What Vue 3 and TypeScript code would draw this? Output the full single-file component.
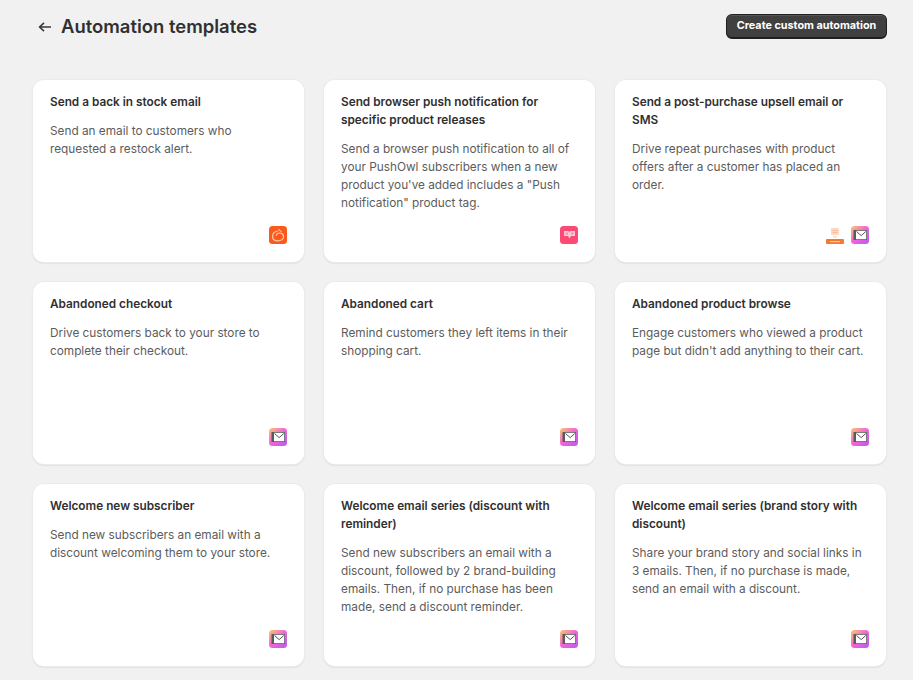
<script setup lang="ts">
interface Card { title: string; body: string; icons: string[] }
const cards: Card[] = [
  { title: 'Send a back in stock email', body: 'Send an email to customers who requested a restock alert.', icons: ['orange'] },
  { title: 'Send browser push notification for specific product releases', body: 'Send a browser push notification to all of your PushOwl subscribers when a new product you\'ve added includes a "Push notification" product tag.', icons: ['owl'] },
  { title: 'Send a post-purchase upsell email or SMS', body: 'Drive repeat purchases with product offers after a customer has placed an order.', icons: ['upsell', 'mail'] },
  { title: 'Abandoned checkout', body: 'Drive customers back to your store to complete their checkout.', icons: ['mail'] },
  { title: 'Abandoned cart', body: 'Remind customers they left items in their shopping cart.', icons: ['mail'] },
  { title: 'Abandoned product browse', body: "Engage customers who viewed a product page but didn't add anything to their cart.", icons: ['mail'] },
  { title: 'Welcome new subscriber', body: 'Send new subscribers an email with a discount welcoming them to your store.', icons: ['mail'] },
  { title: 'Welcome email series (discount with reminder)', body: 'Send new subscribers an email with a discount, followed by 2 brand-building emails. Then, if no purchase has been made, send a discount reminder.', icons: ['mail'] },
  { title: 'Welcome email series (brand story with discount)', body: 'Share your brand story and social links in 3 emails. Then, if no purchase is made, send an email with a discount.', icons: ['mail'] },
]
</script>

<template>
  <div class="page">
    <header class="head">
      <div class="head-left">
        <svg class="back" width="14" height="12" viewBox="0 0 14 12" fill="none">
          <path d="M13 6H2M6 1.8 1.6 6 6 10.2" stroke="#3a3a3a" stroke-width="1.6" />
        </svg>
        <h1>Automation templates</h1>
      </div>
      <button class="cta">Create custom automation</button>
    </header>
    <main class="grid">
      <article v-for="c in cards" :key="c.title" class="card">
        <h2>{{ c.title }}</h2>
        <p>{{ c.body }}</p>
        <div class="icons">
          <template v-for="i in c.icons" :key="i">
            <svg v-if="i === 'mail'" width="18" height="18" viewBox="0 0 18 18">
              <defs>
                <linearGradient id="mg" x1="0" y1="0" x2="1" y2="1">
                  <stop offset="0" stop-color="#fbc868" />
                  <stop offset="0.5" stop-color="#f262dc" />
                  <stop offset="1" stop-color="#b65cec" />
                </linearGradient>
              </defs>
              <rect width="18" height="18" rx="3.5" fill="url(#mg)" />
              <rect x="2.5" y="4" width="13.5" height="10" fill="#5a5a5a" />
              <rect x="5" y="4.8" width="10.2" height="8.4" fill="#fff" />
              <path d="M5.5 5.5 10.2 9.6 14.8 5.5" fill="none" stroke="#555" stroke-width="1" />
            </svg>
            <svg v-else-if="i === 'orange'" width="18" height="18" viewBox="0 0 18 18">
              <rect width="18" height="18" rx="3.5" fill="#fc5a1c" />
              <path d="M9.5 3C10.4 4.4 11 5 12.4 5.6M9 5C5.8 5.4 3.6 7.6 3.6 10.4c0 2.8 2.4 4.4 5.4 4.4 3.2 0 5.6-1.8 5.6-4.2 0-2.2-1.8-3.6-3.8-3.6-2 0-3.4 1.2-3.4 2.8" fill="none" stroke="#fdc7ae" stroke-width="1.2" />
            </svg>
            <svg v-else-if="i === 'owl'" width="18" height="18" viewBox="0 0 18 18">
              <rect width="18" height="18" rx="3.5" fill="#fc4a74" />
              <path d="M4 5H8.5L9.2 6 10 5H15V10H11L9.5 12.5 8 10H4Z" fill="#fdc6d4" />
              <rect x="5.5" y="6.6" width="2.5" height="1.8" fill="#fc8aa6" />
              <rect x="11" y="6.6" width="2.5" height="1.8" fill="#fc8aa6" />
            </svg>
            <svg v-else class="upsell" width="18" height="18" viewBox="0 0 18 18">
              <rect x="5" y="2" width="8" height="7" rx="1" fill="#fbd9c4" />
              <rect x="6.5" y="4" width="5" height="1" fill="#f6c0a0" />
              <rect x="6.5" y="6" width="5" height="1" fill="#f6c0a0" />
              <rect x="7" y="10" width="4" height="1.5" fill="#fbd9c4" />
              <rect x="0" y="13" width="18" height="5" rx="1" fill="#f47a30" />
              <rect x="4" y="15" width="10" height="1.2" fill="#fbc8a4" />
            </svg>
          </template>
        </div>
      </article>
    </main>
  </div>
</template>

<style>
html, body { margin: 0; background: #f1f1f1; }
</style>

<style scoped>
.page {
  box-sizing: border-box;
  width: 913px;
  height: 680px;
  overflow: hidden;
  padding: 14px 26px 0 33px;
  font-family: Inter, "Liberation Sans", sans-serif;
  color: #303030;
}
.head {
  display: flex;
  justify-content: space-between;
  align-items: flex-start;
  height: 66px;
}
.head-left {
  display: flex;
  align-items: center;
  gap: 9px;
  height: 26px;
  padding-left: 5px;
}
h1 {
  margin: 0 0 1px;
  font-size: 18.45px;
  line-height: 25px;
  font-weight: 600;
  color: #303030;
}
.cta {
  box-sizing: border-box;
  width: 161px;
  height: 25px;
  padding: 0;
  border: 1px solid #1f1f1f;
  border-bottom-width: 2px;
  border-radius: 6px;
  background: #404040;
  box-shadow: inset 0 1px 0 rgba(255, 255, 255, 0.12);
  color: #fff;
  font: 700 10.8px/1 Inter, "Liberation Sans", sans-serif;
}
.grid {
  display: grid;
  grid-template-columns: repeat(3, 271px);
  grid-auto-rows: 182px;
  gap: 20px;
}
.card {
  box-sizing: border-box;
  display: flex;
  flex-direction: column;
  padding: 13px 17px 18px;
  background: #fff;
  border-radius: 11px;
  box-shadow: 0 0 0 1px #ebebeb, 0 1px 2px rgba(0, 0, 0, 0.2);
}
h2 {
  margin: 0 0 11px;
  font-size: 11.8px;
  line-height: 18px;
  font-weight: 600;
  color: #303030;
}
p {
  margin: 0;
  font-size: 11.8px;
  line-height: 18px;
  color: #5c5c5c;
}
.icons {
  margin-top: auto;
  display: flex;
  justify-content: flex-end;
  gap: 7px;
}
</style>
